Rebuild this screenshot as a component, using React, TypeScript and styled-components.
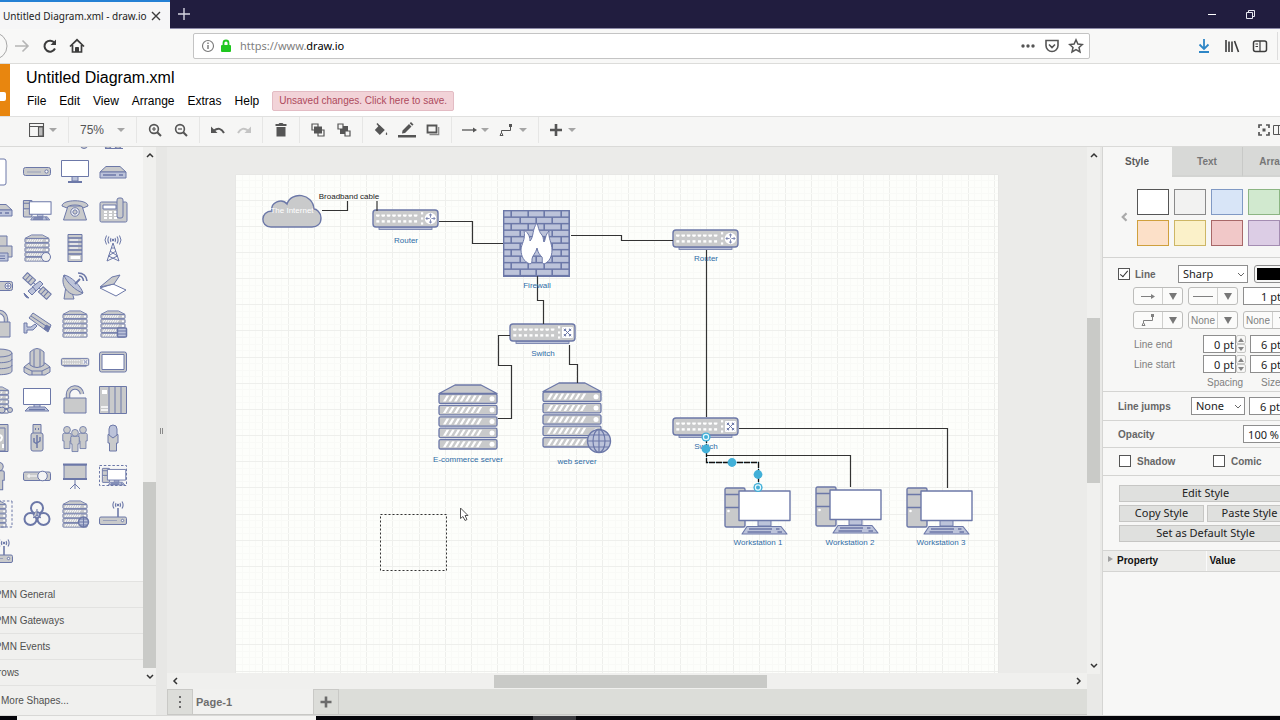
import React from 'react';
import styled, { createGlobalStyle } from 'styled-components';

const STROKE = '#6c78a8';
const FILL = '#c9cacb';
const BLUEFILL = '#bcc3da';
const UI = '"Noto Sans", "Open Sans", sans-serif';

const Global = createGlobalStyle`
  *, *::before, *::after { box-sizing: border-box; }
  body { margin: 0; background: #f6f6f5; font-family: "Liberation Sans", Arial, sans-serif; font-size: 12px; color: #000; }
  button, input, select { font: inherit; color: inherit; margin: 0; }
  button { background: none; border: 0; padding: 0; cursor: pointer; }
  svg { display: block; flex: none; }
`;

/* ---------- window ---------- */

const Window = styled.div`
  display: flex;
  flex-direction: column;
  height: 100vh;
  overflow: hidden;
`;

const TitleBar = styled.header`
  display: flex;
  align-items: stretch;
  height: 29px;
  flex: none;
  background: #211d3f;
  border-bottom: 1px solid #8d8aa8;
`;

const BrowserTab = styled.div`
  display: flex;
  align-items: center;
  justify-content: space-between;
  width: 170px;
  height: 29px;
  padding: 0 9px 0 3px;
  background: #f6f6f7;
  border-top: 2px solid #2480d4;
  font: 10px/16px ${UI};
  color: #222;
  white-space: nowrap;
`;

const IconButton = styled.button<{ $w: number; $c?: string }>`
  display: flex;
  align-items: center;
  justify-content: center;
  flex: none;
  width: ${(p) => p.$w}px;
  color: ${(p) => p.$c ?? '#3c3c3c'};
`;

const Grow = styled.div`
  flex: 1;
`;

const NavBar = styled.nav`
  display: flex;
  align-items: center;
  height: 35px;
  flex: none;
  background: #f8f8f7;
  border-bottom: 1px solid #dcdcda;
`;

const NavLeft = styled.div`
  display: flex;
  align-items: center;
  width: 193px;
  flex: none;
`;

const NavRight = styled.div`
  display: flex;
  align-items: center;
  justify-content: flex-end;
  width: 190px;
  flex: none;
`;

const UrlBar = styled.div`
  display: flex;
  align-items: center;
  flex: 1;
  min-width: 0;
  height: 26px;
  padding: 0 1px 0 5px;
  background: #fff;
  border: 1px solid #c4c4c4;
  border-radius: 2px;
`;

const UrlText = styled.div`
  flex: 1;
  padding-left: 6px;
  font: 11px/18px ${UI};
  color: #000;
  span { color: #808080; }
`;

/* ---------- application header ---------- */

const AppHeader = styled.header`
  display: flex;
  height: 52px;
  flex: none;
  background: #fff;
`;

const Logo = styled.div`
  width: 10px;
  padding-top: 28px;
  background: #e8860f;
`;

const LogoNode = styled.div`
  width: 6px;
  height: 9px;
  background: #fff;
  border-radius: 0 2px 2px 0;
`;

const HeaderText = styled.div`
  display: flex;
  flex-direction: column;
  padding: 4px 0 0 16px;
`;

const FileName = styled.h1`
  margin: 0;
  font-size: 16px;
  font-weight: 400;
  line-height: 20px;
`;

const MenuBar = styled.div`
  display: flex;
  align-items: center;
  height: 26px;
  padding-left: 1px;
  gap: 13px;
`;

const MenuItem = styled.button`
  line-height: 16px;
`;

const SaveNotice = styled.button`
  height: 20px;
  padding: 0 6px;
  font-size: 10px;
  line-height: 18px;
  color: #ad4a5c;
  background: #f2d3d8;
  border: 1px solid #e3bcc4;
  border-radius: 2px;
  white-space: nowrap;
`;

/* ---------- toolbar ---------- */

const Toolbar = styled.div`
  display: flex;
  align-items: center;
  height: 31px;
  flex: none;
  padding: 0 0 3px 20px;
  background: #f6f6f5;
  border-top: 1px solid #e0e0df;
  border-bottom: 1px solid #dadad8;
  color: #555;
`;

const ToolGroup = styled.div<{ $last?: boolean }>`
  display: flex;
  align-items: center;
  height: 26px;
  padding: 0 5px;
  border-right: ${(p) => (p.$last ? '0' : '1px solid #e6e6e5')};
`;

const ToolButton = styled.button<{ $w?: number }>`
  display: flex;
  align-items: center;
  justify-content: center;
  width: ${(p) => p.$w ?? 26}px;
  height: 24px;
  color: #555;
`;

const DropButton = styled(ToolButton)`
  justify-content: space-between;
  padding: 0 6px 0 4px;
`;

const ZoomButton = styled(DropButton)`
  padding-left: 6px;
`;

const Caret = styled.span`
  border: 4px solid transparent;
  border-top-color: #a5a5a5;
  border-bottom-width: 0;
`;

/* ---------- main area ---------- */

const Main = styled.main`
  display: flex;
  flex: 1;
  min-height: 0;
  background: #e9e9e7;
`;

const Sidebar = styled.aside`
  display: flex;
  flex-direction: column;
  width: 156px;
  flex: none;
  background: #f0f0ee;
`;

const SidebarScroll = styled.div`
  display: flex;
  flex: 1;
  min-height: 0;
`;

const SidebarContent = styled.div`
  display: flex;
  flex-direction: column;
  width: 143px;
  min-height: 0;
`;

const PaletteView = styled.div`
  display: flex;
  flex-direction: column;
  justify-content: flex-end;
  flex: 1;
  min-height: 0;
  overflow: hidden;
  padding-bottom: 10px;
  background: #f7f7f6;
`;

const Palette = styled.div`
  display: grid;
  grid-template-columns: repeat(4, 38px);
  grid-auto-rows: 38px;
  flex: none;
  margin-left: -20px;
`;

const PaletteItem = styled.button`
  display: flex;
  align-items: center;
  justify-content: center;
`;

const Section = styled.button`
  height: 26px;
  width: 143px;
  flex: none;
  overflow: hidden;
  border-top: 1px solid #e2e2e0;
  font-size: 10px;
  line-height: 24px;
  text-align: left;
  color: #505050;
  white-space: nowrap;
  span { margin-left: -12px; }
`;

const MoreShapes = styled.button`
  height: 30px;
  flex: none;
  padding-left: 1px;
  border-top: 1px solid #e2e2e0;
  font-size: 10px;
  text-align: left;
  color: #505050;
`;

const VScroll = styled.div<{ $before: number; $thumb: number }>`
  display: flex;
  flex-direction: column;
  align-items: center;
  width: 13px;
  flex: none;
  padding: 4px 0;
  background: #f0f0ee;
  color: #333;
  &::before { content: ''; order: 1; flex: ${(p) => p.$before} 0 0; }
  i { order: 2; width: 13px; flex: ${(p) => p.$thumb} 0 0; background: #c9cac7; }
  &::after { content: ''; order: 3; flex: ${(p) => 500 - p.$before - p.$thumb} 0 0; }
  svg:last-of-type { order: 4; }
`;

const Splitter = styled.div`
  display: flex;
  align-items: center;
  justify-content: center;
  width: 11px;
  flex: none;
  background: #e7e7e5;
`;

const Grip = styled.span`
  width: 3px;
  height: 6px;
  border: solid #8a8a8a;
  border-width: 0 1px;
`;

const CanvasScroll = styled(VScroll)`
  margin-bottom: 41px;
`;

const CanvasColumn = styled.section`
  display: flex;
  flex-direction: column;
  flex: 1;
  min-width: 0;
`;

const CanvasView = styled.div`
  display: flex;
  flex: 1;
  min-height: 0;
  padding: 28px 0 0 69px;
  overflow: hidden;
  background: #ebebe9;
`;

const DiagramPage = styled.div`
  width: 762px;
  flex: none;
  background: #fdfefb;
  box-shadow: 0 0 1px #d4d4d2;
`;

const HScroll = styled.div`
  display: flex;
  align-items: center;
  height: 16px;
  flex: none;
  padding: 0 4px;
  background: #f0f0ee;
  color: #333;
`;

const HThumb = styled.div`
  flex: 271 0 0;
  height: 13px;
  background: #c9cac7;
`;

const HSpace = styled.div<{ $n: number }>`
  flex: ${(p) => p.$n} 0 0;
`;

const PageTabs = styled.div`
  display: flex;
  height: 26px;
  flex: none;
  background: #dcddd9;
  border-bottom: 1px solid #c8c8c5;
`;

const PageButton = styled.button`
  display: flex;
  align-items: center;
  justify-content: center;
  width: 26px;
  border: 1px solid #c9c9c6;
  border-bottom: 0;
  color: #6b6b6b;
`;

const PageTab = styled.button`
  width: 120px;
  padding-left: 3px;
  text-align: left;
  font-size: 11px;
  font-weight: 700;
  color: #6e6e6e;
  background: #f1f1ef;
`;

/* ---------- format panel ---------- */

const FormatPanel = styled.aside`
  width: 178px;
  flex: none;
  overflow: hidden;
  margin-left: 2px;
  background: #f7f7f6;
  border-left: 1px solid #d5d5d3;
  font-size: 10px;
  color: #666;
`;

const PanelInner = styled.div`
  width: 212px;
`;

const PanelTabs = styled.div`
  display: grid;
  grid-template-columns: 69px 71px 72px;
  height: 30px;
`;

const PanelTab = styled.button<{ $on?: boolean }>`
  font-weight: 700;
  color: ${(p) => (p.$on ? '#5a5a5a' : '#777')};
  background: ${(p) => (p.$on ? '#f7f7f6' : '#d8d9d7')};
  border-right: 1px solid ${(p) => (p.$on ? '#f7f7f6' : '#c8c9c7')};
  border-bottom: 2px solid ${(p) => (p.$on ? '#f7f7f6' : '#d3d4d2')};
`;

const PanelSection = styled.div<{ $h: number }>`
  display: flow-root;
  height: ${(p) => p.$h}px;
  border-bottom: 1px solid #d4d4d2;
`;

const SwatchArea = styled(PanelSection)`
  display: flex;
  align-items: center;
  gap: 9px;
  padding-left: 17px;
`;

const Swatches = styled.div`
  display: grid;
  grid-template-columns: repeat(4, 32px);
  grid-auto-rows: 26px;
  gap: 5px;
`;

const Swatch = styled.button<{ $bg: string; $line: string }>`
  background: ${(p) => p.$bg};
  border: 1px solid ${(p) => p.$line};
`;

const Row = styled.div<{ $top?: number; $left?: number; $gap?: number }>`
  display: flex;
  align-items: center;
  height: 18px;
  margin-top: ${(p) => p.$top ?? 0}px;
  padding-left: ${(p) => p.$left ?? 15}px;
  gap: ${(p) => p.$gap ?? 4}px;
`;

const CheckLabel = styled.label<{ $w: number; $gap?: number }>`
  display: flex;
  align-items: center;
  gap: ${(p) => p.$gap ?? 5}px;
  width: ${(p) => p.$w}px;
  font-weight: 700;
`;

const Check = styled.input`
  appearance: none;
  width: 12px;
  height: 12px;
  border: 1px solid #555;
  background: #fff;
  position: relative;
  &:checked::after {
    content: '';
    position: absolute;
    left: 3px;
    top: 0;
    width: 4px;
    height: 8px;
    border: solid #333;
    border-width: 0 1px 1px 0;
    transform: rotate(40deg);
  }
`;

const Caption = styled.label<{ $w: number; $b?: boolean }>`
  width: ${(p) => p.$w}px;
  font-weight: ${(p) => (p.$b ? 700 : 400)};
  color: ${(p) => (p.$b ? '#666' : '#808080')};
`;

const SelectWrap = styled.div<{ $w: number }>`
  position: relative;
  width: ${(p) => p.$w}px;
  height: 18px;
  svg { position: absolute; right: 3px; top: 6px; pointer-events: none; }
`;

const Select = styled.select`
  appearance: none;
  width: 100%;
  height: 18px;
  padding: 0 4px;
  background: #fff;
  border: 1px solid #8e8e8e;
  border-radius: 0;
  font: 11px/16px ${UI};
  color: #222;
`;

const Field = styled.input<{ $w: number }>`
  width: ${(p) => p.$w}px;
  height: 18px;
  padding: 0 1px;
  background: #fff;
  border: 1px solid #8e8e8e;
  font: 11px/16px ${UI};
  color: #222;
  text-align: right;
`;

const ColorButton = styled.button`
  width: 36px;
  height: 18px;
  padding: 2px;
  background: #f7f7f6;
  border: 1px solid #8e8e8e;
  border-radius: 3px;
  &::before { content: ''; display: block; height: 12px; background: #000; }
`;

const Split = styled.button<{ $w: number }>`
  display: grid;
  grid-template-columns: 1fr 20px;
  align-items: center;
  justify-items: center;
  width: ${(p) => p.$w}px;
  height: 18px;
  background: #fbfbfa;
  border: 1px solid #bdbdbb;
  border-radius: 3px;
  color: #808080;
`;

const DownBox = styled.span`
  display: flex;
  align-items: center;
  justify-content: center;
  width: 20px;
  height: 16px;
  border-left: 1px solid #cfcfcd;
  &::after {
    content: '';
    border: 4px solid transparent;
    border-top: 7px solid #777;
    border-bottom: 0;
  }
`;

const Stepper = styled.span`
  display: flex;
  flex-direction: column;
  width: 10px;
  height: 18px;
`;

const Step = styled.button<{ $up?: boolean }>`
  display: flex;
  align-items: center;
  justify-content: center;
  height: 9px;
  border: 1px solid #c6c6c4;
  border-radius: 2px;
  &::after {
    content: '';
    border: 3px solid transparent;
    border-top: ${(p) => (p.$up ? '0' : '4px solid #858585')};
    border-bottom: ${(p) => (p.$up ? '4px solid #858585' : '0')};
  }
`;

const StyleButtons = styled(PanelSection)`
  display: grid;
  grid-template-columns: 1fr 1fr;
  grid-auto-rows: 17px;
  gap: 3px;
  align-content: center;
  padding: 0 23px 0 16px;
`;

const StyleButton = styled.button<{ $wide?: boolean }>`
  grid-column: ${(p) => (p.$wide ? 'span 2' : 'auto')};
  background: #dfe0de;
  border: 1px solid #c6c6c4;
  font: 11px/14px ${UI};
  color: #222;
  white-space: nowrap;
`;

const PropertyTable = styled.table`
  width: 100%;
  border-collapse: collapse;
  table-layout: fixed;
  color: #111;
  th {
    height: 20px;
    padding: 0 0 0 3px;
    text-align: left;
    background: #ececea;
    border-bottom: 1px solid #d4d4d2;
  }
  th:first-child { width: 103px; border-right: 1px solid #fafafa; }
  th span {
    display: inline-block;
    margin: 0 4px 2px 2px;
    border: 3px solid transparent;
    border-left: 5px solid #a0a0a0;
    border-right: 0;
  }
`;

const TaskBar = styled.footer`
  display: flex;
  height: 5px;
  flex: none;
  padding-left: 17px;
  background: #05050a;
  border-top: 1px solid #d8d8d6;
  &::before { content: ''; width: 299px; background: #f4f4f2; }
  &::after { content: ''; width: 43px; margin-left: 217px; background: #3b3b40; }
`;

/* ---------- small drawings ---------- */

type Dir = 'up' | 'down' | 'left' | 'right';
const CHEVRON: Record<Dir, string> = {
  up: 'M1 6L4 3L7 6',
  down: 'M1 2L4 5L7 2',
  left: 'M6 1L3 4L6 7',
  right: 'M2 1L5 4L2 7',
};
const Chevron = ({ d, s = 8, w = 1.5 }: { d: Dir; s?: number; w?: number }) => (
  <svg width={s} height={s} viewBox="0 0 8 8" fill="none" stroke="currentColor" strokeWidth={w}>
    <path d={CHEVRON[d]} />
  </svg>
);

const Glyph = ({ w = 16, h = 16, sw = 1.5, fill = 'none', children }: {
  w?: number; h?: number; sw?: number; fill?: string; children: React.ReactNode;
}) => (
  <svg width={w} height={h} viewBox={`0 0 ${w} ${h}`} fill={fill} stroke="currentColor" strokeWidth={sw}>
    {children}
  </svg>
);

const ConnectorGlyph = () => (
  <Glyph w={14} h={14} sw={1}>
    <path d="M2.5 10V7.5H11.5V4" />
    <path d="M1 12.5L2.5 9.5L4 12.5Z" />
    <rect x="10.5" y="1.5" width="2" height="2" fill="currentColor" />
  </Glyph>
);

/* ---------- network shapes ---------- */

const ServerShape = ({ sw = 1.3, n = 5 }: { sw?: number; n?: number }) => (
  <g fill={FILL} stroke={STROKE} strokeWidth={sw} strokeLinejoin="round">
    <path d="M1 9.5L17 1H43L59 9.5Z" />
    {Array.from({ length: n }, (_, i) => {
      const y = 10 + i * 11.4;
      return (
        <g key={i}>
          <rect x="1" y={y} width="58" height="9.4" rx="1.5" />
          {Array.from({ length: 7 }, (_, k) => (
            <path key={k} stroke="none" fill="#fff" d={`M${5 + k * 5.5} ${y + 7.6}l3.6 -6h2.6l-3.6 6z`} />
          ))}
          <circle cx="54" cy={y + 4.7} r="2.5" fill="#fff" stroke="none" />
        </g>
      );
    })}
  </g>
);

const BoxShape = ({ kind, sw = 1.4 }: { kind: 'router' | 'switch'; sw?: number }) => (
  <g stroke={STROKE} strokeWidth={sw}>
    <rect x="7" y="18" width="53" height="2.4" fill={BLUEFILL} strokeWidth={sw * 0.6} />
    <rect x="1" y="1" width="65" height="17" rx="3" fill={FILL} />
    <g fill="#fff" stroke="none">
      {Array.from({ length: 8 }, (_, k) => (
        <g key={k}>
          <path d={`M${4 + k * 5.4} 5.5h3.6v1.4l-.8 .8h-2l-.8 -.8z`} />
          <path d={`M${4.3 + k * 5.4} 11.2h3v2.4h-3z`} />
        </g>
      ))}
      <rect x="49" y="3.2" width="2.2" height="2.2" />
      <rect x="49" y="8.4" width="2.2" height="2.2" />
      <rect x="49" y="13.4" width="2.2" height="2.2" />
      {kind === 'router' ? <circle cx="58.5" cy="9.5" r="5.8" /> : <rect x="53" y="4" width="11" height="11" rx="1" />}
    </g>
    {kind === 'router' ? (
      <path fill="none" strokeWidth={sw * 0.6} d="M58.5 5V8.6M57 6.4L58.5 5L60 6.4M58.5 14V10.4M57 12.6L58.5 14L60 12.6M54 9.5H57.6M55.4 8L54 9.5L55.4 11M63 9.5H59.4M61.6 8L63 9.5L61.6 11" />
    ) : (
      <path fill="none" strokeWidth={sw * 0.7} d="M54.8 5.8L62.2 13.2M62.2 5.8L54.8 13.2M54.8 7.4L56.6 7.4V5.6M60.4 5.6V7.4H62.2M54.8 11.6H56.6V13.4M60.4 13.4V11.6H62.2" />
    )}
  </g>
);

const PcShape = ({ sw = 1.4 }: { sw?: number }) => (
  <g fill={FILL} stroke={STROKE} strokeWidth={sw} strokeLinejoin="round">
    <rect x="1" y="1" width="20" height="39" rx="1.5" />
    <path d="M1 7.5H21M1 20.5H21" />
    <circle cx="4.5" cy="24" r="1.3" fill="#fff" stroke="none" />
    <path fill={BLUEFILL} d="M34 33H47V39H34Z" strokeWidth={sw * 0.7} />
    <rect x="15" y="4" width="51" height="29.5" fill="#fff" />
    <path fill={BLUEFILL} strokeWidth={sw * 0.8} d="M23 39.5H57L63 47H18Z" />
    <path fill="none" strokeWidth={sw} d="M25 42H48M23.5 45H47M52 42H55.5M53.5 45H58" />
  </g>
);

const MonitorShape = () => (
  <>
    <path d="M-3 4V9H3V4" fill={BLUEFILL} />
    <rect x="-13.5" y="-11.5" width="27" height="16" fill="#fff" />
  </>
);

const Rays = ({ x, y }: { x: number; y: number }) => (
  <g fill="none" strokeWidth="1.1">
    <path d={`M${x - 2} ${y - 2}q-1.3 2 0 4M${x + 2} ${y - 2}q1.3 2 0 4M${x - 4} ${y - 3.5}q-2.2 3.5 0 7M${x + 4} ${y - 3.5}q2.2 3.5 0 7`} />
    <circle cx={x} cy={y} r="0.8" />
  </g>
);

const MiniServer = ({ x = -12.5, w = 25 }: { x?: number; w?: number }) => (
  <g transform={`translate(${x} -13.5) scale(${w / 60} 0.41)`}><ServerShape sw={2.1} /></g>
);

const Person = ({ x, y, s = 1 }: { x: number; y: number; s?: number }) => (
  <g transform={`translate(${x} ${y}) scale(${s})`}>
    <path d="M-5 -3.5Q-5 -5 -3 -5H3Q5 -5 5 -3.5V4H3.5V13H-3.5V4H-5Z" />
    <circle cx="0" cy="-9" r="4" />
  </g>
);

const SHAPES: Record<string, React.ReactNode> = {
  none: null,
  ringLow: <circle cx="9" cy="11" r="3.5" />,
  ringsLow: <><circle cx="-5" cy="11" r="3.5" /><circle cx="5" cy="11" r="3.5" /><path d="M-8 14.5H10" /></>,
  tablet: <><rect x="-10" y="-13" width="17" height="26" rx="2" fill="#fff" /></>,
  hub: <><rect x="-13.5" y="-4.5" width="27" height="8" rx="2" /><path d="M-10 0H4" stroke="#9aa1bb" /><circle cx="9.5" cy="-.5" r="1.6" fill="#fff" /></>,
  monitor: <><MonitorShape /><path d="M-7 10H7" strokeWidth="2" /></>,
  modem: <><path d="M-13 0L-7 -5.5H7L13 0Z" /><rect x="-13" y="0" width="26" height="6" fill={BLUEFILL} /><path d="M-10 3H3M6 3H10" strokeWidth="1.6" /></>,
  pc: <g transform="translate(-14 -10) scale(.425)"><PcShape sw={2.4} /></g>,
  phone: <><path d="M-7 -4H7L11.5 10H-11.5Z" /><circle cx="0" cy="2" r="4.2" fill="#fff" /><circle cx="0" cy="2" r="2.2" /><path d="M-13 -4C-13 -11 13 -11 13 -4L8 -2C8 -6 -8 -6 -8 -2Z" /></>,
  fax: <><rect x="-13" y="-8" width="27" height="20" rx="1.5" /><rect x="-10" y="-5" width="13" height="4" fill="#fff" /><path d="M-9 2H4M-9 5H4M-9 8H4" stroke="#fff" strokeWidth="2" strokeDasharray="3 2" /><rect x="4" y="-12" width="6" height="20" rx="2" /></>,
  printer: <><rect x="-9" y="-12" width="17" height="12" /><rect x="-14" y="-2" width="27" height="11" /><path d="M-9 5H9V13H-9ZM-6 8H6M-6 10.5H6" fill={BLUEFILL} /></>,
  serverDisc: <><MiniServer /><circle cx="9" cy="9" r="4.5" fill="#f0f0f0" /></>,
  rack: <><rect x="-7" y="-13.5" width="14" height="27" /><path d="M-7 -10H7M-7 -6H7M-7 -2H7M-7 2H7M-7 6H7" strokeWidth="1.6" /><path d="M-5 -8H3M-5 -4H3M-5 0H3" stroke="#fff" /><path d="M-4.500 9.500H5" stroke="#fff" strokeWidth="3" /></>,
  tower: <><path fill="none" d="M-6 13L0 -5L6 13M-4.5 8L3 3M4.5 8L-3 3M-6 13L4.5 8M6 13L-4.5 8M-2 0H2" /><Rays x={0} y={-8} /><path d="M-6.500 -12.500q-3 4.500 0 9M6.500 -12.500q3 4.500 0 9" fill="none" /></>,
  routerPlus: <><rect x="-13.5" y="-4.5" width="27" height="9" rx="2" /><circle cx="9" cy="0" r="3" fill="#fff" /><path d="M7 0H11M9 -2V2" /></>,
  satellite: <><g transform="rotate(42)"><rect x="-16" y="-3.5" width="11" height="7" /><rect x="5" y="-3.5" width="11" height="7" /><path d="M-12.5 -3.5V3.5M-9 -3.5V3.5M8.5 -3.5V3.5M12 -3.5V3.5M-5 0H5" /></g><path d="M3 -5L6 -2L-1 5L-5 1Z" fill={BLUEFILL} /><path d="M-4 1L-9 5L-5 9L-1 5Z" fill={BLUEFILL} /><path d="M-13 7Q-12 12 -8 12Z" fill={STROKE} /></>,
  dish: <><path d="M-9 0L-11 13H-1L-3 6Z" /><path d="M-11 -11C-16 2 -2 14 8 7Z" /><path d="M-11 -11C-4 -10 6 0 8 7C1 5 -9 -4 -11 -11Z" fill={BLUEFILL} /><path d="M0 -2L5 -7" strokeWidth="2" /><path fill="none" d="M4 -10Q8 -10 8.5 -5M3 -13Q11 -13 12 -5" strokeWidth="1.6" /></>,
  scanner: <><path d="M-13 2L0 -2L13 4L3 10Z" fill="#fff" /><path d="M-13 1L-1 -9L7 -11L1 -2Z" /></>,
  lock: <><path d="M-7 0V-5A7 7 0 0 1 7 -5V0" fill="none" strokeWidth="4.5" /><path d="M-7 0V-5A7 7 0 0 1 7 -5V0" fill="none" stroke={FILL} strokeWidth="2.5" /><rect x="-11" y="-2" width="22" height="15" /></>,
  camera: <><path d="M-13 -1V9H-10V6H-4L0 2L-2 0L-6 3H-10V-1Z" fill={BLUEFILL} /><path d="M-8 -6L-4 -11L14 1L11 8Z" /><path d="M-6 -8L12 4" /><path d="M9 1L13 3L11 7L7 5Z" fill={STROKE} /></>,
  server: <MiniServer />,
  storage: <><MiniServer /><rect x="4.500" y="4" width="9" height="9" rx="1" fill={BLUEFILL} strokeWidth="1.500" /><path d="M5 7H14M5 10H14" /></>,
  database: <><path d="M-13 -9V9C-13 14 13 14 13 9V-9" /><ellipse cx="0" cy="-9" rx="13" ry="4" /><path fill="none" d="M-13 -3C-13 2 13 2 13 -3M-13 3C-13 8 13 8 13 3" /></>,
  mainframe: <><path d="M-13 5L-8 1H8L13 5V10L8 13H-8L-13 10Z" /><path d="M-13 5L-5 9H5L13 5M-5 9V13M5 9V13" fill="none" /><path d="M-7 -10Q0 -17 7 -10V3Q0 8 -7 3ZM-3 -12V5M3 -12V5" /></>,
  switch: <g transform="translate(-14 -4) scale(.42)"><BoxShape kind="switch" sw={2.2} /></g>,
  tabletWide: <><rect x="-13.5" y="-10" width="27" height="20" rx="2" /><rect x="-11" y="-7.5" width="22" height="15" fill="#fff" /></>,
  serverKey: <><MiniServer x={-14} w={24} /><path d="M3 9H12" strokeWidth="1.5" /><circle cx="3" cy="10" r="3" /><circle cx="11" cy="10" r="2.5" /></>,
  terminal: <><MonitorShape /><path d="M-8 7H8L12 11H-12Z" fill={BLUEFILL} /><path d="M-8 9.5H8" strokeWidth="1.5" /></>,
  unlocked: <><path d="M-7 -1V-5A6 6 0 0 1 7 -6" fill="none" strokeWidth="4.5" /><path d="M-7 -1V-5A6 6 0 0 1 7 -6" fill="none" stroke={FILL} strokeWidth="2.5" /><rect x="-11" y="-2" width="22" height="15" /></>,
  cabinets: <><rect x="-13.5" y="-13.5" width="27" height="27" /><path d="M-4 -13V13M2 -13V13M8 -13V13" /><rect x="-11" y="-10" width="5" height="4" fill="#fff" stroke="none" /><path d="M-12 7H-5M-12 10H-5" stroke="#fff" strokeWidth="1.5" /></>,
  ups: <><rect x="-12" y="-13.5" width="21" height="27" /><rect x="-12" y="-10" width="18" height="23" fill={FILL} /><path d="M1 -3Q5 -1 1 3M0 6V10M4 6V10" stroke="#fff" strokeWidth="2" fill="none" /></>,
  usb: <><rect x="-4" y="-13.5" width="8" height="9" /><path d="M-2 -9H-1M1 -9H2" strokeWidth="2" /><rect x="-6" y="-5" width="12" height="18" rx="2" /><path d="M0 -3V10M-3 0V4L0 6M3 -1V3L0 5" strokeWidth="1.5" fill="none" /></>,
  users: <><Person x={-8} y={-0.5} s={0.85} /><Person x={8} y={-0.5} s={0.85} /><Person x={0} y={2.5} s={0.85} /></>,
  user: <><path d="M-5 -3.5H5V5H3.5V13H-3.5V5H-5Z" /><path d="M-4 -3V-9A4 4 0 0 1 4 -9V-3L0 0Z" fill={BLUEFILL} /></>,
  userLeft: <Person x={0} y={0} s={1.05} />,
  projector: <><rect x="-13.5" y="-4" width="27" height="8.5" rx="1.5" /><path d="M-10 0H0M-8 2V-2" stroke="#fff" /><circle cx="5.5" cy="0" r="4.8" fill="#f4f4f4" /></>,
  screen: <><path d="M0 4V13M-5 13L0 8L5 13" fill="none" /><rect x="-11" y="-11" width="22" height="14" /><path d="M-12 -11.5H12M-12 3H12" strokeWidth="2" /></>,
  virtualPc: <><rect x="-13.5" y="-10.5" width="27" height="20" fill="none" strokeDasharray="2.5 1.8" /><g transform="translate(-11 -8) scale(.36)"><PcShape sw={2.6} /></g></>,
  virtualServer: <><g transform="translate(-4 0)"><MiniServer w={24} /></g><path d="M13 -13V13H-13V-13Z" fill="none" strokeDasharray="2.5 1.8" /></>,
  virus: <><g fill="none" strokeWidth="2"><circle cx="0" cy="-6" r="6" /><circle cx="-6.5" cy="5" r="6" /><circle cx="6.5" cy="5" r="6" /></g><circle cx="0" cy="1" r="3" fill={BLUEFILL} strokeWidth="1.5" /><path d="M0 -5V1L-4 4M0 1L4 4" /></>,
  webServer: <><MiniServer /><circle cx="8.5" cy="8" r="5" fill={BLUEFILL} strokeWidth="1.5" /><path d="M3.5 8H13.5M8.5 3V13M5 5H12M5 11H12" /></>,
  wireless: <><path d="M5 3V-6" strokeWidth="1.6" /><Rays x={5} y={-9} /><rect x="-13.5" y="3" width="27" height="7.5" rx="1.5" /><path d="M-10 6.5H4" stroke="#9aa1bb" /><circle cx="9.5" cy="6.5" r="1.2" fill="#fff" /></>,
};

const PALETTE: string[] = [
  'none', 'none', 'ringLow', 'ringsLow',
  'tablet', 'hub', 'monitor', 'modem',
  'modem', 'pc', 'phone', 'fax',
  'printer', 'serverDisc', 'rack', 'tower',
  'routerPlus', 'satellite', 'dish', 'scanner',
  'lock', 'camera', 'server', 'storage',
  'database', 'mainframe', 'switch', 'tabletWide',
  'serverKey', 'terminal', 'unlocked', 'cabinets',
  'ups', 'usb', 'users', 'user',
  'userLeft', 'projector', 'screen', 'virtualPc',
  'virtualServer', 'virus', 'webServer', 'wireless',
  'wireless',
];

/* ---------- diagram ---------- */

const EDGES = [
  'M86 35.5H111.500V26', 'M141 26V36',
  'M203 46.5H236.5V68.5H267',
  'M335 60.5H385.5V65.5H437',
  'M470.5 75V242',
  'M301.5 101V125.5H307.5V149',
  'M274 160.5H262.5V190.5H275.5V243.5H262',
  'M333.5 170V189.5H341.5V208',
  'M503 253.5H711.5V313',
  'M470.5 280.5H614.5V312',
];

const LABELS: [string, number, number][] = [
  ['Router', 170, 68], ['Router', 470, 86], ['Firewall', 301, 113], ['Switch', 307, 181],
  ['E-commerce server', 232, 287], ['web server', 341, 289], ['Switch', 470, 274],
  ['Workstation 1', 522, 370], ['Workstation 2', 614, 370], ['Workstation 3', 705, 370],
];

const Firewall = () => (
  <g transform="translate(267 35)">
    <rect x="0" y="0" width="67" height="67" fill={STROKE} />
    {Array.from({ length: 10 }, (_, r) => {
      const y = 1.4 + r * 6.5;
      const cuts = r % 2 === 0 ? [1.4, 9, 26, 42, 59, 67] : [1.4, 18, 34, 50, 67];
      return cuts.slice(0, -1).map((x, i) => (
        <rect key={`${r}-${i}`} x={x} y={y} width={cuts[i + 1] - x - 1.6} height="5" fill={BLUEFILL} />
      ));
    })}
    <path
      fill="#fff"
      stroke={STROKE}
      strokeWidth="1"
      d="M27 54C21 52 18 46 18 40C18 34 23 30 21 20C26 23 27 28 27 31C31 27 29 19 34 13C36 19 36 22 39 25C41 28 40 31 41 32C43 29 42 25 46 21C45 28 49 33 49 40C49 47 46 52 41 54C38 53 40 49 39 47C37 45 35 43 34 38C33 43 29 46 29 49C29 52 29 53 27 54Z"
    />
  </g>
);

const LABEL_BLUE = '#2f6ca6';

const Diagram = () => (
  <svg width="762" height="500" viewBox="0 0 762 500" fontFamily='"Liberation Sans", Arial, sans-serif' fontSize="8">
    <g shapeRendering="crispEdges" fill="none">
      {Array.from({ length: 116 }, (_, i) => (
        <path key={`v${i}`} stroke={i % 4 === 3 ? '#eeefec' : '#f9faf7'} d={`M${Math.round(6 + i * 6.54) + 0.5} 0V500`} />
      ))}
      {Array.from({ length: 76 }, (_, i) => (
        <path key={`h${i}`} stroke={i % 4 === 3 ? '#eeefec' : '#f9faf7'} d={`M0 ${Math.round(5 + i * 6.54) + 0.5}H762`} />
      ))}
    </g>
    <path
      fill={FILL}
      stroke={STROKE}
      strokeWidth="1.4"
      d="M35 52C24 52 24 36 36 36C34 27 46 23 51 29C55 16 77 18 78 34C80 34 85 37 85 43C85 49 81 52 76 52Z"
    />
    <text x="56" y="38" textAnchor="middle" fill="#fff">The Internet</text>
    <text x="113" y="24" textAnchor="middle" fill="#222">Broadband cable</text>
    <g transform="translate(136 34)"><BoxShape kind="router" /></g>
    <Firewall />
    <g transform="translate(436 54)"><BoxShape kind="router" /></g>
    <g transform="translate(273 148)"><BoxShape kind="switch" /></g>
    <g transform="translate(436 242)"><BoxShape kind="switch" /></g>
    <g transform="translate(202 209)"><ServerShape /></g>
    <g transform="translate(306 207)"><ServerShape /></g>
    <g transform="translate(363 266)" fill={BLUEFILL} stroke={STROKE} strokeWidth="1.4">
      <circle r="11.500" />
      <path fill="none" d="M-11.5 0H11.5M0 -11.5V11.5M-9.5 -6H9.5M-9.5 6H9.5" strokeWidth="1.2" />
      <ellipse fill="none" rx="6" ry="11.5" strokeWidth="1.2" />
    </g>
    <g transform="translate(488 312)"><PcShape /></g>
    <g transform="translate(579 311)"><PcShape /></g>
    <g transform="translate(670 312)"><PcShape /></g>
    <g fill="none" stroke="#333" strokeWidth="1.2">
      {EDGES.map((d) => <path key={d} d={d} />)}
      <path d="M470.5 262V287.5H522.5V313" stroke="#8fd0ea" strokeWidth="1" />
      <path d="M470.5 262V287.5H522.5V313" stroke="#111" strokeWidth="1.3" strokeDasharray="6 1" />
      <rect x="144.5" y="339.5" width="66" height="56" stroke="#333" strokeWidth="1" strokeDasharray="2 2" />
    </g>
    {LABELS.map(([t, x, y]) => (
      <text key={t + x} x={x} y={y} textAnchor="middle" fill={LABEL_BLUE}>{t}</text>
    ))}
    <g fill="#42b0d8">
      <circle cx="470" cy="274" r="4.4" />
      <circle cx="496" cy="287.5" r="4.4" />
      <circle cx="522" cy="299.5" r="4.4" />
      {[[470, 262], [522, 312.5]].map(([x, y]) => (
        <g key={x}>
          <circle cx={x} cy={y} r="4.6" />
          <circle cx={x} cy={y} r="2.6" fill="none" stroke="#e6f7fd" strokeWidth="1.2" />
        </g>
      ))}
    </g>
    <path d="M224.5 333V343.5L227 341.5L229 345.5L231 344.5L229 340.5H232Z" fill="#fff" stroke="#555" />
  </svg>
);

/* ---------- page ---------- */

const SWATCHES: [string, string][] = [
  ['#ffffff', '#555555'], ['#f2f2f1', '#8a8a8a'], ['#d8e5f7', '#8099c4'], ['#d1e9cf', '#8cb583'],
  ['#fce0c8', '#cfa03c'], ['#fbf1c9', '#cdb665'], ['#f1c8c8', '#a86868'], ['#dccde5', '#a48db2'],
];

const Spin = ({ label, value }: { label: string; value: string }) => (
  <>
    <Field $w={33} aria-label={label} defaultValue={value} />
    <Stepper>
      <Step $up aria-label={`Increase ${label}`} />
      <Step aria-label={`Decrease ${label}`} />
    </Stepper>
  </>
);

export default function App() {
  return (
    <Window>
      <Global />
      <TitleBar>
        <BrowserTab>
          Untitled Diagram.xml - draw.io
          <IconButton $w={10} aria-label="Close tab">
            <Glyph w={10} h={10} sw={1.4}><path d="M1 1L9 9M9 1L1 9" /></Glyph>
          </IconButton>
        </BrowserTab>
        <IconButton $w={28} $c="#d6d5e2" aria-label="New tab">
          <Glyph w={12} h={12} sw={1.4}><path d="M6 0V12M0 6H12" /></Glyph>
        </IconButton>
        <Grow />
        <IconButton $w={20} $c="#fff" aria-label="Minimize">
          <Glyph w={10} h={10} sw={1}><path d="M1 5.5H9" /></Glyph>
        </IconButton>
        <IconButton $w={58} $c="#e8e8f0" aria-label="Restore">
          <Glyph w={12} h={12} sw={1}><path d="M1.5 4.5H7.5V10.5H1.5ZM3.5 4V2.5H9.5V8.5H8" /></Glyph>
        </IconButton>
      </TitleBar>

      <NavBar>
        <NavLeft>
          <IconButton $w={8} aria-label="Back">
            <Glyph w={8} h={28} sw={1}><circle cx="-6.5" cy="14" r="13.5" stroke="#a8a8a8" /></Glyph>
          </IconButton>
          <IconButton $w={28} $c="#b5b5b5" aria-label="Forward">
            <Glyph sw={1.6}><path d="M1 8H14M8.5 2.5L14 8L8.5 13.5" /></Glyph>
          </IconButton>
          <IconButton $w={27} aria-label="Reload">
            <Glyph sw={2}><path d="M13 10.5A5.5 5.5 0 1 1 12.5 5" /><path d="M14 1.5V7H8.5Z" fill="currentColor" stroke="none" /></Glyph>
          </IconButton>
          <IconButton $w={28} aria-label="Home">
            <Glyph sw={1.7}><path d="M1 8.5L8 1.8L15 8.5M3.5 7V14H12.5V7" /><path d="M6.5 14V9.5H9.5V14" fill="currentColor" strokeWidth="1" /></Glyph>
          </IconButton>
        </NavLeft>
        <UrlBar>
          <IconButton $w={18} $c="#777" aria-label="Site information">
            <Glyph w={14} h={14} sw={1.1}><circle cx="7" cy="7" r="5.5" /><path d="M7 6V10M7 3.5V5" strokeWidth="1.4" /></Glyph>
          </IconButton>
          <IconButton $w={17} $c="#1fc71f" aria-label="Secure connection">
            <Glyph w={12} h={14} sw={1.8}><path d="M3.5 7V4A2.5 2.5 0 0 1 8.5 4V7" /><rect x="1" y="6" width="10" height="7" rx="1" fill="currentColor" stroke="none" /></Glyph>
          </IconButton>
          <UrlText role="textbox" aria-label="Address" contentEditable suppressContentEditableWarning>
            <span>https://www.</span>draw.io
          </UrlText>
          <IconButton $w={25} $c="#555" aria-label="Page actions">
            <Glyph fill="currentColor" sw={0}><circle cx="3" cy="8" r="1.7" /><circle cx="8" cy="8" r="1.7" /><circle cx="13" cy="8" r="1.7" /></Glyph>
          </IconButton>
          <IconButton $w={24} $c="#555" aria-label="Save to Pocket">
            <Glyph sw={1.6}><path d="M2 2.5H14V7.5A6 6 0 0 1 2 7.5ZM5 6.5L8 9.5L11 6.5" /></Glyph>
          </IconButton>
          <IconButton $w={24} $c="#555" aria-label="Bookmark">
            <Glyph sw={1.5}><path d="M8 1.8L9.9 6L14.3 6.5L11 9.5L12 14L8 11.7L4 14L5 9.5L1.7 6.5L6.1 6Z" /></Glyph>
          </IconButton>
        </UrlBar>
        <NavRight>
          <IconButton $w={28} $c="#2e86c6" aria-label="Downloads">
            <Glyph sw={1.8}><path d="M8 1V10.5M3.5 6.5L8 11L12.5 6.5M3 14H13" /></Glyph>
          </IconButton>
          <IconButton $w={28} aria-label="Library">
            <Glyph sw={1.6}><path d="M2 2V14M5 3.5V14M8 3.5V14M10.5 3L14.5 14" /></Glyph>
          </IconButton>
          <IconButton $w={28} aria-label="Sidebars">
            <Glyph sw={1.5}><rect x="1.5" y="3" width="13" height="10.5" rx="2" /><path d="M8 3V13.5M3.5 6H6M3.5 8.5H6" strokeWidth="1.2" /></Glyph>
          </IconButton>
          <svg width="6" height="28" viewBox="0 0 6 28"><path d="M3.5 0V28" stroke="#ddd" /></svg>
        </NavRight>
      </NavBar>

      <AppHeader>
        <Logo><LogoNode /></Logo>
        <HeaderText>
          <FileName>Untitled Diagram.xml</FileName>
          <MenuBar>
            {['File', 'Edit', 'View', 'Arrange', 'Extras', 'Help'].map((m) => <MenuItem key={m}>{m}</MenuItem>)}
            <SaveNotice>Unsaved changes. Click here to save.</SaveNotice>
          </MenuBar>
        </HeaderText>
      </AppHeader>

      <Toolbar>
        <ToolGroup>
          <DropButton $w={38} aria-label="View">
            <Glyph sw={1.1}><path d="M.5 1.5H14.5V14.5H.5ZM.5 4.500H14.5" /><path d="M9.5 5H14V14H9.5Z" fill="#bbb" /></Glyph>
            <Caret />
          </DropButton>
        </ToolGroup>
        <ToolGroup>
          <ZoomButton $w={57}>75%<Caret /></ZoomButton>
        </ToolGroup>
        <ToolGroup>
          <ToolButton aria-label="Zoom in"><Glyph w={14} h={14} sw={1.6}><circle cx="6" cy="6" r="4.4" /><path d="M9.2 9.2L13 13" strokeWidth="2" /><path d="M4 6H8M6 4V8" strokeWidth="1.2" /></Glyph></ToolButton>
          <ToolButton aria-label="Zoom out"><Glyph w={14} h={14} sw={1.6}><circle cx="6" cy="6" r="4.4" /><path d="M9.2 9.2L13 13" strokeWidth="2" /><path d="M4 6H8" strokeWidth="1.2" /></Glyph></ToolButton>
        </ToolGroup>
        <ToolGroup>
          <ToolButton aria-label="Undo"><Glyph w={14} h={10} sw={2}><path d="M3 5.5Q9 1 13 8" /><path d="M0 1.5V8H6.5Z" fill="currentColor" stroke="none" /></Glyph></ToolButton>
          <ToolButton aria-label="Redo"><Glyph w={14} h={10} sw={2}><g opacity=".3"><path d="M11 5.5Q5 1 1 8" /><path d="M14 1.5V8H7.5Z" fill="currentColor" stroke="none" /></g></Glyph></ToolButton>
        </ToolGroup>
        <ToolGroup>
          <ToolButton aria-label="Delete"><Glyph w={12} h={14} fill="currentColor" sw={0}><path d="M0.5 1H3.5L4.5 0H7.5L8.5 1H11.5V3H0.5ZM1.5 4H10.5V13.5H1.5Z" /></Glyph></ToolButton>
        </ToolGroup>
        <ToolGroup>
          <ToolButton aria-label="To front"><Glyph w={14} h={14} sw={1.2}><path d="M1 1H7V7H1ZM7 13H13V7H7Z" /><path d="M3 3.5H11V10.5H3Z" fill="currentColor" stroke="none" /></Glyph></ToolButton>
          <ToolButton aria-label="To back"><Glyph w={14} h={14} sw={1.2}><path d="M3 3H11V11H3Z" fill="currentColor" stroke="none" /><path d="M1 1H6V6H1ZM8 8H13V13H8Z" fill="#f6f6f5" /></Glyph></ToolButton>
        </ToolGroup>
        <ToolGroup>
          <ToolButton aria-label="Fill color"><Glyph w={14} h={14} fill="currentColor" sw={0}><path d="M5.5 2L10.8 7L5.8 12L0.8 7Z" /><path d="M3 0.5L6 4" stroke="currentColor" strokeWidth="1.5" /><path d="M12.5 9Q14 11.5 12.5 12Q11 11.5 12.5 9Z" /></Glyph></ToolButton>
          <ToolButton aria-label="Line color"><Glyph w={18} h={16} fill="currentColor" sw={0}><path d="M0 13H18V15.5H0ZM4 11.5L4.5 8.500L11 2L13.500 4.500L7 11Z" /><path d="M11.7 1.300L13 0L15.500 2.500L14.200 3.800Z" /></Glyph></ToolButton>
          <ToolButton aria-label="Shadow"><Glyph w={14} h={12} sw={1.8}><path d="M1.5 1.5H10.5V8.5H1.5Z" /><path d="M3.5 10.7H12.7V3" strokeWidth="1.2" stroke="#888" /></Glyph></ToolButton>
        </ToolGroup>
        <ToolGroup>
          <DropButton $w={38} aria-label="Connection"><Glyph w={16} h={14} sw={1.3}><path d="M1 7H13" /><path d="M12 4.5L16 7L12 9.5Z" fill="currentColor" stroke="none" /></Glyph><Caret /></DropButton>
          <DropButton $w={38} aria-label="Waypoints"><ConnectorGlyph /><Caret /></DropButton>
        </ToolGroup>
        <ToolGroup $last>
          <DropButton $w={38} aria-label="Insert"><Glyph w={16} h={14} sw={2.6}><path d="M8 1V13M2 7H14" /></Glyph><Caret /></DropButton>
        </ToolGroup>
        <Grow />
        <ToolButton $w={16} aria-label="Fullscreen"><Glyph w={12} h={12} sw={1.7}><path d="M1 4V1H4M8 1H11V4M11 8V11H8M4 11H1V8" /><rect x="4.5" y="4.5" width="3" height="3" fill="currentColor" stroke="none" /></Glyph></ToolButton>
        <ToolButton $w={8} aria-label="Format panel"><Glyph w={8} h={12} sw={1}><path d="M9 1.5H1.5V10.5H9M6.5 1.5V10.5" /></Glyph></ToolButton>
      </Toolbar>

      <Main>
        <Sidebar>
          <SidebarScroll>
            <SidebarContent>
              <PaletteView>
                <Palette>
                  {PALETTE.map((name, i) => (
                    <PaletteItem key={i} aria-label={name}>
                      <svg width="30" height="30" viewBox="-15 -15 30 30" fill={FILL} stroke={STROKE} strokeLinejoin="round">
                        {SHAPES[name]}
                      </svg>
                    </PaletteItem>
                  ))}
                </Palette>
              </PaletteView>
              <Section><span>BPMN General</span></Section>
              <Section><span>BPMN Gateways</span></Section>
              <Section><span>BPMN Events</span></Section>
              <Section><span>Arrows</span></Section>
            </SidebarContent>
            <VScroll $before={314} $thumb={181}><Chevron d="up" /><i /><Chevron d="down" /></VScroll>
          </SidebarScroll>
          <MoreShapes>More Shapes...</MoreShapes>
        </Sidebar>
        <Splitter><Grip /></Splitter>

        <CanvasColumn>
          <CanvasView>
            <DiagramPage><Diagram /></DiagramPage>
          </CanvasView>
          <HScroll>
            <Chevron d="left" />
            <HSpace $n={313} />
            <HThumb />
            <HSpace $n={306} />
            <Chevron d="right" />
          </HScroll>
          <PageTabs>
            <PageButton aria-label="Pages"><Glyph w={4} h={14} fill="currentColor" sw={0}><path d="M1 1H3V3H1ZM1 6H3V8H1ZM1 11H3V13H1Z" /></Glyph></PageButton>
            <PageTab>Page-1</PageTab>
            <PageButton aria-label="Insert page"><Glyph w={12} h={12} sw={2.6}><path d="M6 0.5V11.5M0.5 6H11.5" /></Glyph></PageButton>
          </PageTabs>
        </CanvasColumn>
        <CanvasScroll $before={158} $thumb={164}><Chevron d="up" /><i /><Chevron d="down" /></CanvasScroll>

        <FormatPanel>
          <PanelInner>
            <PanelTabs>
              <PanelTab $on>Style</PanelTab>
              <PanelTab>Text</PanelTab>
              <PanelTab>Arrange</PanelTab>
            </PanelTabs>
            <SwatchArea $h={81}>
              <IconButton $w={8} $c="#aaa" aria-label="Previous colors"><Chevron d="left" s={10} w={1.8} /></IconButton>
              <Swatches>
                {SWATCHES.map(([bg, line]) => <Swatch key={bg} $bg={bg} $line={line} aria-label={bg} />)}
              </Swatches>
            </SwatchArea>

            <PanelSection $h={134}>
              <Row $top={7} $gap={6}>
                <CheckLabel $w={54}><Check type="checkbox" defaultChecked />Line</CheckLabel>
                <SelectWrap $w={70}>
                  <Select aria-label="Line style"><option>Sharp</option><option>Rounded</option><option>Curved</option></Select>
                  <Chevron d="down" w={1} />
                </SelectWrap>
                <ColorButton aria-label="Line color" />
              </Row>
              <Row $top={4} $left={30} $gap={5}>
                <Split $w={50} aria-label="Connection style"><Glyph w={14} h={8} sw={1}><path d="M0 4.5H12" /><path d="M10 2L14 4.5L10 7Z" fill="currentColor" stroke="none" /></Glyph><DownBox /></Split>
                <Split $w={50} aria-label="Line pattern"><Glyph w={20} h={8} sw={1}><path d="M0 4.5H20" /></Glyph><DownBox /></Split>
                <Field $w={40} aria-label="Line width" defaultValue="1 pt" />
              </Row>
              <Row $top={6} $left={30} $gap={5}>
                <Split $w={50} aria-label="Waypoints"><ConnectorGlyph /><DownBox /></Split>
                <Split $w={50}>None<DownBox /></Split>
                <Split $w={50}>None<DownBox /></Split>
              </Row>
              <Row $top={6} $left={31} $gap={0}>
                <Caption $w={69}>Line end</Caption>
                <Spin label="Line end spacing" value="0 pt" />
                <Row $left={4}><Field $w={33} aria-label="Line end size" defaultValue="6 pt" /></Row>
              </Row>
              <Row $top={2} $left={31} $gap={0}>
                <Caption $w={69}>Line start</Caption>
                <Spin label="Line start spacing" value="0 pt" />
                <Row $left={4}><Field $w={33} aria-label="Line start size" defaultValue="6 pt" /></Row>
              </Row>
              <Row $left={104} $gap={0}>
                <Caption as="span" $w={54}>Spacing</Caption>
                <Caption as="span" $w={30}>Size</Caption>
              </Row>
            </PanelSection>

            <PanelSection $h={29}>
              <Row $top={5}>
                <Caption $w={69} $b htmlFor="jumps">Line jumps</Caption>
                <SelectWrap $w={54}>
                  <Select id="jumps"><option>None</option><option>Arc</option><option>Gap</option></Select>
                  <Chevron d="down" w={1} />
                </SelectWrap>
                <Field $w={33} aria-label="Jump size" defaultValue="6 pt" />
              </Row>
            </PanelSection>

            <PanelSection $h={27}>
              <Row $top={4}>
                <Caption $w={121} $b htmlFor="opacity">Opacity</Caption>
                <Field $w={38} id="opacity" defaultValue="100 %" />
              </Row>
            </PanelSection>

            <PanelSection $h={28}>
              <Row $top={4} $left={16} $gap={0}>
                <CheckLabel $w={94} $gap={6}><Check type="checkbox" />Shadow</CheckLabel>
                <CheckLabel $w={80} $gap={6}><Check type="checkbox" />Comic</CheckLabel>
              </Row>
            </PanelSection>

            <StyleButtons $h={75}>
              <StyleButton $wide>Edit Style</StyleButton>
              <StyleButton>Copy Style</StyleButton>
              <StyleButton>Paste Style</StyleButton>
              <StyleButton $wide>Set as Default Style</StyleButton>
            </StyleButtons>

            <PropertyTable>
              <thead><tr><th><span />Property</th><th>Value</th></tr></thead>
            </PropertyTable>
          </PanelInner>
        </FormatPanel>
      </Main>
      <TaskBar />
    </Window>
  );
}
